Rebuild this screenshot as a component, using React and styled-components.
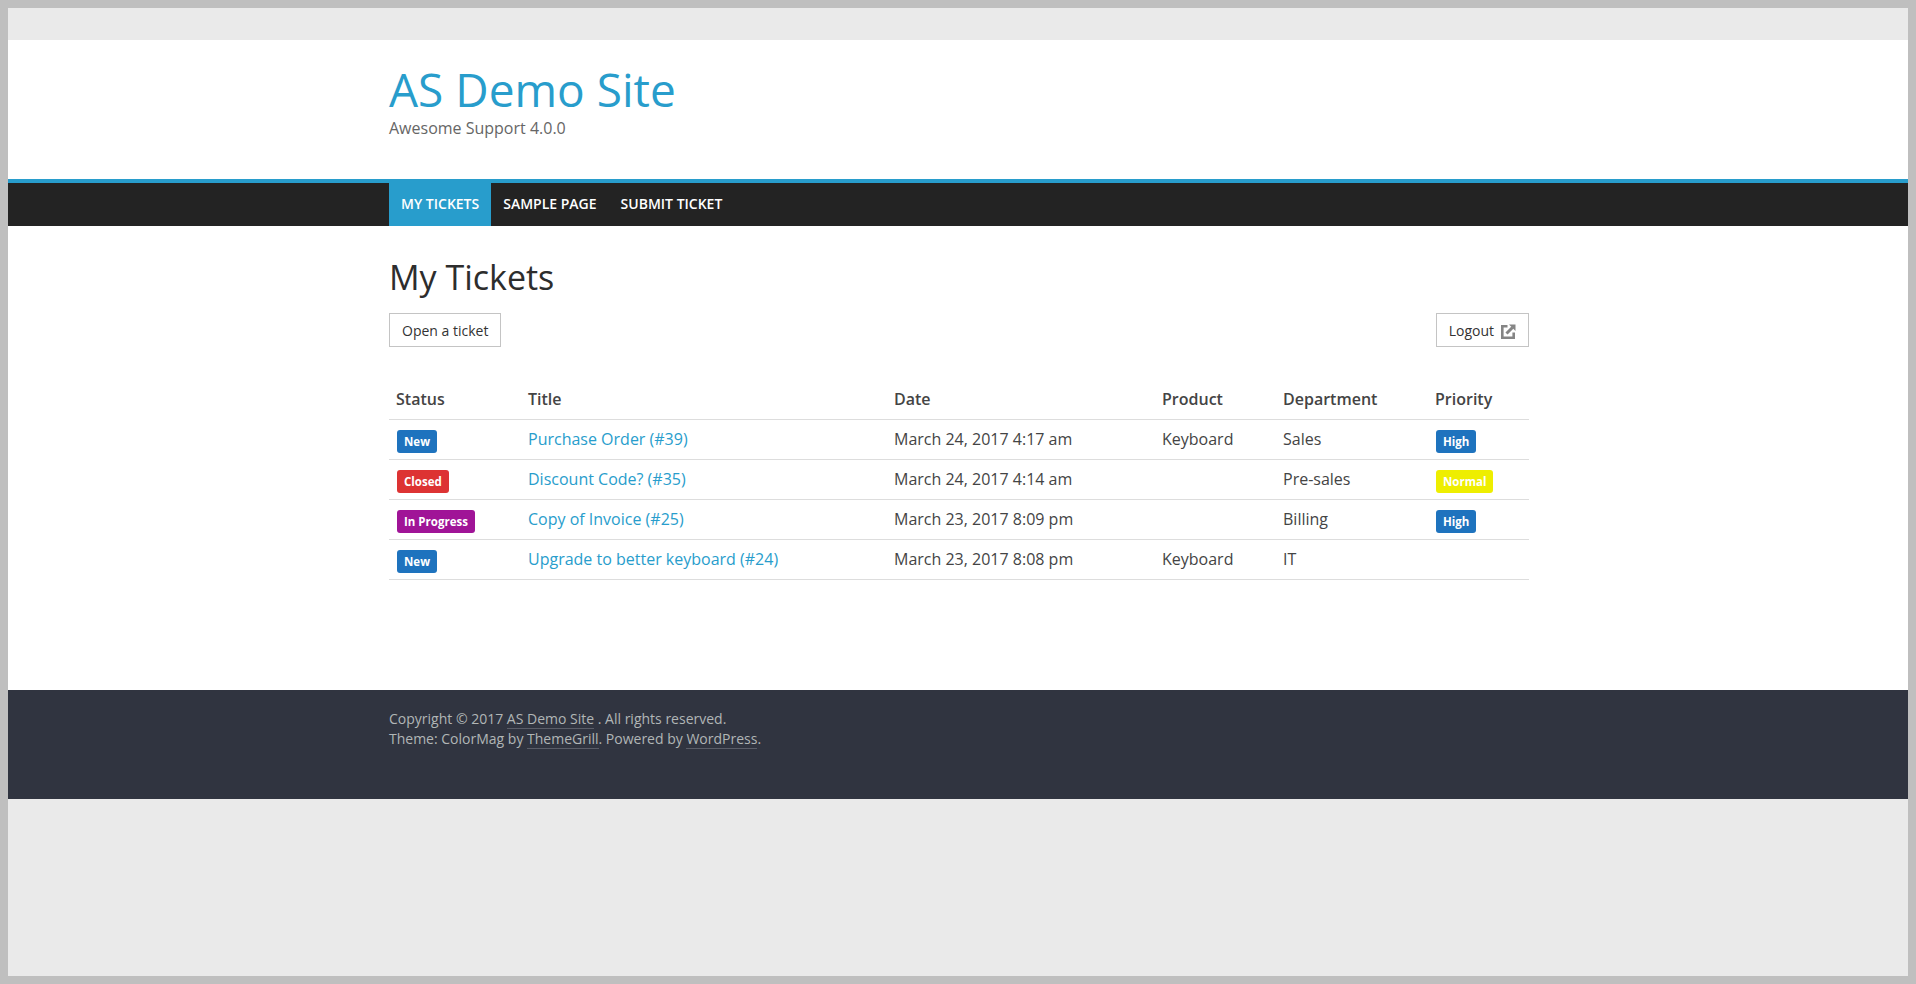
import React from 'react';
import styled, { createGlobalStyle } from 'styled-components';

const GlobalStyle = createGlobalStyle`
  html, body {
    margin: 0;
    padding: 0;
    height: 100%;
  }
  body {
    font-family: "Open Sans", "Liberation Sans", sans-serif;
    font-size: 16px;
    color: #444444;
    background: #bfbfbf;
  }
`;

const Frame = styled.div`
  box-sizing: border-box;
  height: 984px;
  border: 8px solid #bfbfbf;
  background: #eaeaea;
  padding-top: 32px;
  overflow: hidden;
`;

const Page = styled.div`
  background: #ffffff;
`;

const Inner = styled.div`
  width: 1140px;
  margin: 0 379px 0 381px;
`;

const Header = styled.header`
  height: 139px;
  padding-top: 23px;
  box-sizing: border-box;
`;

const SiteTitle = styled.h1`
  margin: 0;
  font-size: 46px;
  line-height: 52px;
  font-weight: 400;
  color: #289dcc;
`;

const Tagline = styled.p`
  margin: 0;
  padding-top: 1px;
  font-size: 16px;
  line-height: 24px;
  color: #666666;
`;

const Nav = styled.nav`
  height: 43px;
  background: #232323;
  border-top: 4px solid #289dcc;
`;

const NavList = styled(Inner)`
  display: flex;
  height: 100%;
`;

const NavItem = styled.a`
  display: flex;
  align-items: center;
  padding: 0 12px 2px;
  font-size: 14px;
  font-weight: 600;
  text-transform: uppercase;
  color: #ffffff;
  background: ${(p) => (p.$active ? '#289dcc' : 'transparent')};
`;

const Main = styled.main`
  height: 464px;
  padding-top: 30px;
  box-sizing: border-box;
`;

const PageTitle = styled.h2`
  margin: 0;
  font-size: 34px;
  line-height: 42px;
  font-weight: 400;
  color: #2d2d2d;
`;

const Toolbar = styled.div`
  display: flex;
  justify-content: space-between;
  margin-top: 15px;
`;

const ToolButton = styled.a`
  display: flex;
  align-items: center;
  gap: 7px;
  box-sizing: border-box;
  height: 34px;
  padding: 0 12px;
  border: 1px solid #c4c4c4;
  font-size: 14px;
  color: #333333;
  background: #ffffff;
`;

const LogoutIcon = styled.svg`
  width: 15px;
  height: 15px;
  margin-top: 3px;
  color: #858585;
`;

const Table = styled.table`
  width: 100%;
  margin-top: 32px;
  border-collapse: collapse;
  table-layout: fixed;
`;

const HeadCell = styled.th`
  height: 40px;
  padding: 0 7px;
  box-sizing: border-box;
  text-align: left;
  font-size: 16px;
  font-weight: 600;
  color: #444444;
  border-bottom: 1px solid #dddddd;
`;

const Cell = styled.td`
  height: 40px;
  padding: 0 7px;
  box-sizing: border-box;
  font-size: 16px;
  color: #444444;
  border-bottom: 1px solid #dddddd;
`;

const TicketLink = styled.a`
  color: #289dcc;
`;

const Badge = styled.span`
  display: inline-block;
  margin: 5px 0 0 1px;
  padding: 0 7px;
  height: 23px;
  line-height: 23px;
  border-radius: 3px;
  font-size: 11.5px;
  font-weight: 700;
  color: #ffffff;
  vertical-align: middle;
  background: ${(p) => p.$color};
`;

const Footer = styled.footer`
  height: 109px;
  padding-top: 19px;
  box-sizing: border-box;
  background: #303440;
  font-size: 14px;
  line-height: 20px;
  color: #b1b6b6;
`;

const FooterLink = styled.a`
  color: #b1b6b6;
  border-bottom: 1px solid #5a5d68;
`;

const BLUE = '#1e73be';
const RED = '#dd3333';
const PURPLE = '#a01497';
const YELLOW = '#eeee00';

const columns = [
  { name: 'Status', width: 132 },
  { name: 'Title', width: 366 },
  { name: 'Date', width: 268 },
  { name: 'Product', width: 121 },
  { name: 'Department', width: 152 },
  { name: 'Priority', width: 101 },
];

const tickets = [
  { status: ['New', BLUE], title: 'Purchase Order (#39)', date: 'March 24, 2017 4:17 am', product: 'Keyboard', department: 'Sales', priority: ['High', BLUE] },
  { status: ['Closed', RED], title: 'Discount Code? (#35)', date: 'March 24, 2017 4:14 am', product: '', department: 'Pre-sales', priority: ['Normal', YELLOW] },
  { status: ['In Progress', PURPLE], title: 'Copy of Invoice (#25)', date: 'March 23, 2017 8:09 pm', product: '', department: 'Billing', priority: ['High', BLUE] },
  { status: ['New', BLUE], title: 'Upgrade to better keyboard (#24)', date: 'March 23, 2017 8:08 pm', product: 'Keyboard', department: 'IT', priority: null },
];

export default function App() {
  return (
    <Frame>
      <GlobalStyle />
      <Page>
        <Header>
          <Inner>
            <SiteTitle>AS Demo Site</SiteTitle>
            <Tagline>Awesome Support 4.0.0</Tagline>
          </Inner>
        </Header>
        <Nav>
          <NavList>
            <NavItem $active>My Tickets</NavItem>
            <NavItem>Sample Page</NavItem>
            <NavItem>Submit Ticket</NavItem>
          </NavList>
        </Nav>
        <Main>
          <Inner>
            <PageTitle>My Tickets</PageTitle>
            <Toolbar>
              <ToolButton>Open a ticket</ToolButton>
              <ToolButton>
                Logout
                <LogoutIcon viewBox="0 0 15 15" fill="none" stroke="currentColor">
                  <path d="M6.5 2.3H1.3v11.4h11.4V8.5" strokeWidth="2.6" />
                  <path d="M5.5 9.5l6-6" strokeWidth="3" />
                  <path d="M8 0.5h6.5V7z" fill="currentColor" stroke="none" />
                </LogoutIcon>
              </ToolButton>
            </Toolbar>
            <Table>
              <colgroup>
                {columns.map((c) => (
                  <col key={c.name} width={c.width} />
                ))}
              </colgroup>
              <thead>
                <tr>
                  {columns.map((c) => (
                    <HeadCell key={c.name}>{c.name}</HeadCell>
                  ))}
                </tr>
              </thead>
              <tbody>
                {tickets.map((t) => (
                  <tr key={t.title}>
                    <Cell>
                      <Badge $color={t.status[1]}>{t.status[0]}</Badge>
                    </Cell>
                    <Cell>
                      <TicketLink>{t.title}</TicketLink>
                    </Cell>
                    <Cell>{t.date}</Cell>
                    <Cell>{t.product}</Cell>
                    <Cell>{t.department}</Cell>
                    <Cell>
                      {t.priority && <Badge $color={t.priority[1]}>{t.priority[0]}</Badge>}
                    </Cell>
                  </tr>
                ))}
              </tbody>
            </Table>
          </Inner>
        </Main>
        <Footer>
          <Inner>
            Copyright © 2017 <FooterLink>AS Demo Site</FooterLink> . All rights reserved.
            <br />
            Theme: ColorMag by <FooterLink>ThemeGrill</FooterLink>. Powered by{' '}
            <FooterLink>WordPress</FooterLink>.
          </Inner>
        </Footer>
      </Page>
    </Frame>
  );
}
